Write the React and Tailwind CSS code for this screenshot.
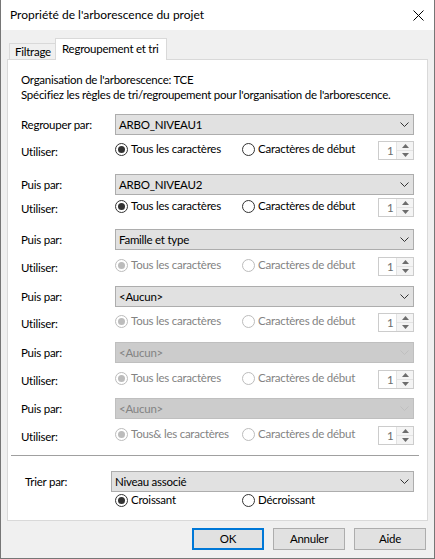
import React from 'react';

// boite de dialogue "Propriété de l'arborescence du projet" (style Windows 10)

const Chevron = ({ disabled }) => (
  <svg width="9" height="5" viewBox="0 0 9 5" className="shrink-0">
    <path d="M0.5 0.5 L4.5 4.5 L8.5 0.5" fill="none" stroke={disabled ? '#bfbfbf' : '#333333'} strokeWidth="1" />
  </svg>
);

const Combo = ({ value, disabled }) => (
  <div
    className={`flex h-[21px] flex-1 items-center justify-between border pl-[3px] pr-[4px] ${
      disabled ? 'border-[#bfbfbf] bg-[#cccccc] text-[#838383]' : 'border-[#adadad] bg-[#e1e1e1] text-black'
    }`}
  >
    <span className="whitespace-nowrap leading-[16px]">{value}</span>
    <Chevron disabled={disabled} />
  </div>
);

const Radio = ({ checked, disabled, label }) => (
  <div className={`flex h-[16px] items-center gap-[3px] leading-[16px] ${disabled ? 'text-[#838383]' : 'text-black'}`}>
    <span
      className={`flex h-[13px] w-[13px] shrink-0 items-center justify-center rounded-full border bg-white ${
        disabled ? 'border-[#bcbcbc]' : 'border-[#333333]'
      }`}
    >
      {checked && <span className={`h-[7px] w-[7px] rounded-full ${disabled ? 'bg-[#bcbcbc]' : 'bg-[#333333]'}`} />}
    </span>
    <span className="whitespace-nowrap">{label}</span>
  </div>
);

const Spin = () => (
  <div className="flex h-[19px] w-[36px] border border-[#cccccc] bg-white">
    <div className="flex flex-1 items-center pl-[8px] leading-[16px] text-[#6d6d6d]">1</div>
    <div className="flex w-[17px] flex-col border-l border-[#e3e3e3] bg-[#f4f4f4]">
      <div className="flex flex-1 items-center justify-center border-b border-[#e3e3e3]">
        <svg width="7" height="4" viewBox="0 0 7 4">
          <path d="M0 4 L3.5 0 L7 4 Z" fill="#6d6d6d" />
        </svg>
      </div>
      <div className="flex flex-1 items-center justify-center">
        <svg width="7" height="4" viewBox="0 0 7 4">
          <path d="M0 0 L3.5 4 L7 0 Z" fill="#6d6d6d" />
        </svg>
      </div>
    </div>
  </div>
);

const Group = ({ className, gapClass, label, value, comboDisabled, radiosDisabled, first = 'Tous les caractères' }) => (
  <div className={className}>
    <div className="flex items-center">
      <span className="w-[94px] shrink-0 whitespace-nowrap leading-[16px]">{label}</span>
      <Combo value={value} disabled={comboDisabled} />
    </div>
    <div className={`flex h-[19px] items-start ${gapClass}`}>
      <span className="mt-[3px] w-[94px] shrink-0 leading-[16px]">Utiliser:</span>
      <div className="w-[127px] shrink-0">
        <Radio checked disabled={radiosDisabled} label={first} />
      </div>
      <Radio disabled={radiosDisabled} label="Caractères de début" />
      <div className="ml-auto">
        <Spin />
      </div>
    </div>
  </div>
);

const Button = ({ children, primary }) => (
  <div
    className={`flex h-[22px] w-[72px] items-center justify-center bg-[#e1e1e1] leading-[16px] ${
      primary ? 'border-2 border-[#0078d7]' : 'border border-[#adadad]'
    }`}
  >
    {children}
  </div>
);

export default function App() {
  return (
    <div className="flex h-[559px] w-[435px] flex-col overflow-hidden border-x border-b border-[#767676] bg-[#f0f0f0] font-['Segoe_UI','Lato',sans-serif] text-[11.5px] tracking-[-0.25px] text-black">
      {/* barre de titre */}
      <div className="flex h-[30px] shrink-0 items-center justify-between bg-white pl-[9px] pr-[10px]">
        <span className="whitespace-nowrap text-[12px] leading-[16px] tracking-normal">
          Propriété de l'arborescence du projet
        </span>
        <svg width="11" height="11" viewBox="0 0 11 11">
          <path d="M0.5 0.5 L10.5 10.5 M10.5 0.5 L0.5 10.5" stroke="#000" strokeWidth="1" />
        </svg>
      </div>

      {/* onglets */}
      <div className="ml-[6px] mt-[8px] flex h-[21px] shrink-0 items-end">
        <div className="ml-[2px] flex h-[16px] w-[46px] items-center whitespace-nowrap border-l border-t border-[#d9d9d9] pl-[5px] leading-[16px]">
          Filtrage
        </div>
        <div className="relative z-10 -mb-px flex h-[22px] w-[112px] items-start whitespace-nowrap border-x border-t border-[#d9d9d9] bg-white pl-[6px] pt-[2px] leading-[16px]">
          Regroupement et tri
        </div>
      </div>

      <div className="ml-[6px] h-[462px] w-[421px] shrink-0 border border-[#d9d9d9] bg-white">
        <div className="pl-[13px] pr-[13px] pt-[12px]">
          <p className="whitespace-nowrap leading-[15px]">Organisation de l'arborescence: TCE</p>
          <p className="whitespace-nowrap leading-[15px]">
            Spécifiez les règles de tri/regroupement pour l'organisation de l'arborescence.
          </p>

          <Group className="mt-[12px]" gapClass="mt-[6px]" label="Regrouper par:" value="ARBO_NIVEAU1" />
          <Group className="mt-[14px]" gapClass="mt-[3px]" label="Puis par:" value="ARBO_NIVEAU2" />
          <Group className="mt-[12px]" gapClass="mt-[7px]" label="Puis par:" value="Famille et type" radiosDisabled />
          <Group className="mt-[10px]" gapClass="mt-[6px]" label="Puis par:" value="<Aucun>" radiosDisabled />
          <Group className="mt-[10px]" gapClass="mt-[7px]" label="Puis par:" value="<Aucun>" comboDisabled radiosDisabled />
          <Group
            className="mt-[9px]"
            gapClass="mt-[7px]"
            label="Puis par:"
            value="<Aucun>"
            comboDisabled
            radiosDisabled
            first="Tous& les caractères"
          />
        </div>

        <div className="ml-[3px] mr-[8px] mt-[10px] border-t border-[#a0a0a0]" />

        <div className="pl-[17px] pr-[13px] pt-[15px]">
          <div className="flex items-center">
            <span className="w-[86px] shrink-0 leading-[16px]">Trier par:</span>
            <Combo value="Niveau associé" />
          </div>
          <div className="ml-[90px] flex items-start">
            <div className="w-[127px] shrink-0">
              <Radio checked label="Croissant" />
            </div>
            <Radio label="Décroissant" />
          </div>
        </div>
      </div>

      {/* boutons */}
      <div className="mt-[7px] flex justify-end gap-[9px] pr-[8px]">
        <Button primary>OK</Button>
        <Button>Annuler</Button>
        <Button>Aide</Button>
      </div>
    </div>
  );
}
